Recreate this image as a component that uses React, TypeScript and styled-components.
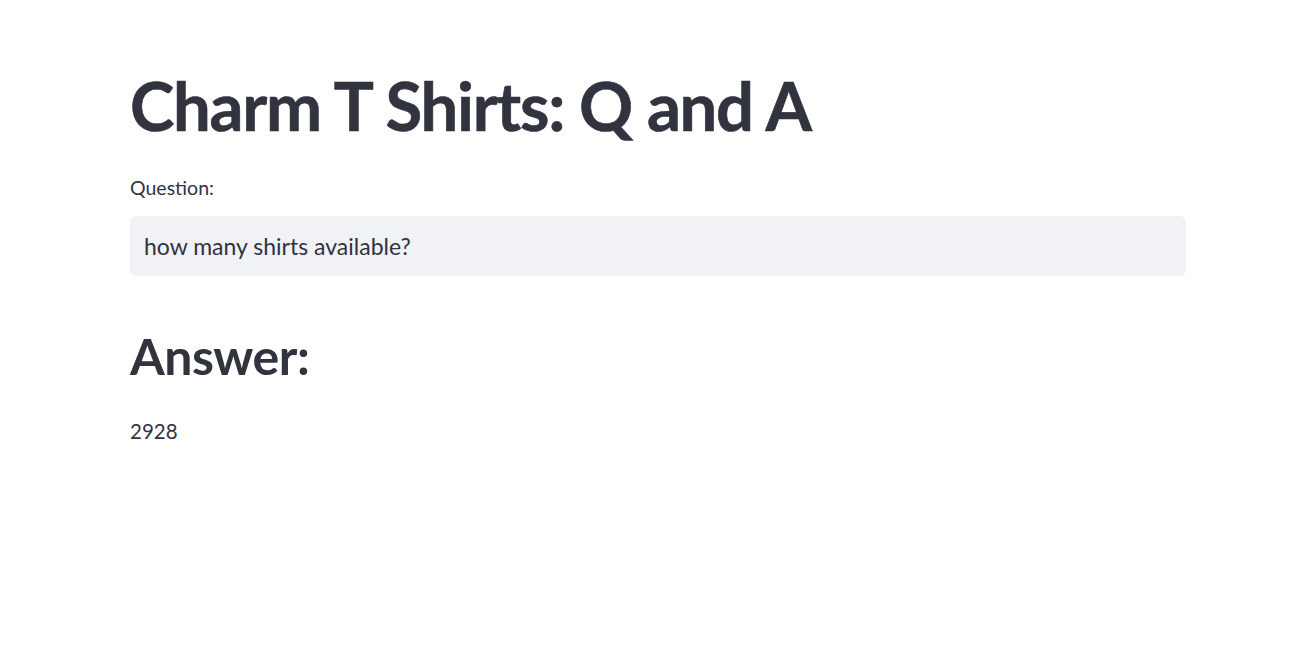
import React from 'react';
import styled, { createGlobalStyle } from 'styled-components';

const GlobalStyle = createGlobalStyle`
  html, body {
    margin: 0;
    padding: 0;
    background: #ffffff;
  }
  body {
    font-family: Lato, "Noto Sans", sans-serif;
    color: #31333f;
  }
`;

const Main = styled.main`
  width: 1056px;
  margin: 0 0 0 130px;
  padding-top: 67px;
  display: flex;
  flex-direction: column;
`;

const Title = styled.h1`
  margin: 0;
  font-size: 67px;
  font-weight: 700;
  line-height: 76px;
  letter-spacing: -1.3px;
  color: #31333f;
  -webkit-text-stroke: 0.6px #31333f;
`;

const Label = styled.label`
  margin-top: 33px;
  font-size: 19.5px;
  line-height: 24px;
  color: #31333f;
`;

const Input = styled.input`
  margin-top: 16px;
  height: 60px;
  box-sizing: border-box;
  border: none;
  outline: none;
  border-radius: 6px;
  background: #f0f2f6;
  padding: 0 14px;
  font-family: inherit;
  font-size: 23px;
  color: #31333f;
`;

const Heading = styled.h2`
  margin: 50px 0 0;
  font-size: 50px;
  font-weight: 700;
  line-height: 60px;
  letter-spacing: -0.5px;
  color: #31333f;
`;

const Answer = styled.p`
  margin: 31px 0 0;
  font-size: 20.5px;
  line-height: 28px;
`;

export default function App() {
  return (
    <>
      <GlobalStyle />
      <Main>
        <Title>Charm T Shirts: Q and A</Title>
        <Label htmlFor="question">Question:</Label>
        <Input id="question" defaultValue="how many shirts available?" />
        <Heading>Answer:</Heading>
        <Answer>2928</Answer>
      </Main>
    </>
  );
}
